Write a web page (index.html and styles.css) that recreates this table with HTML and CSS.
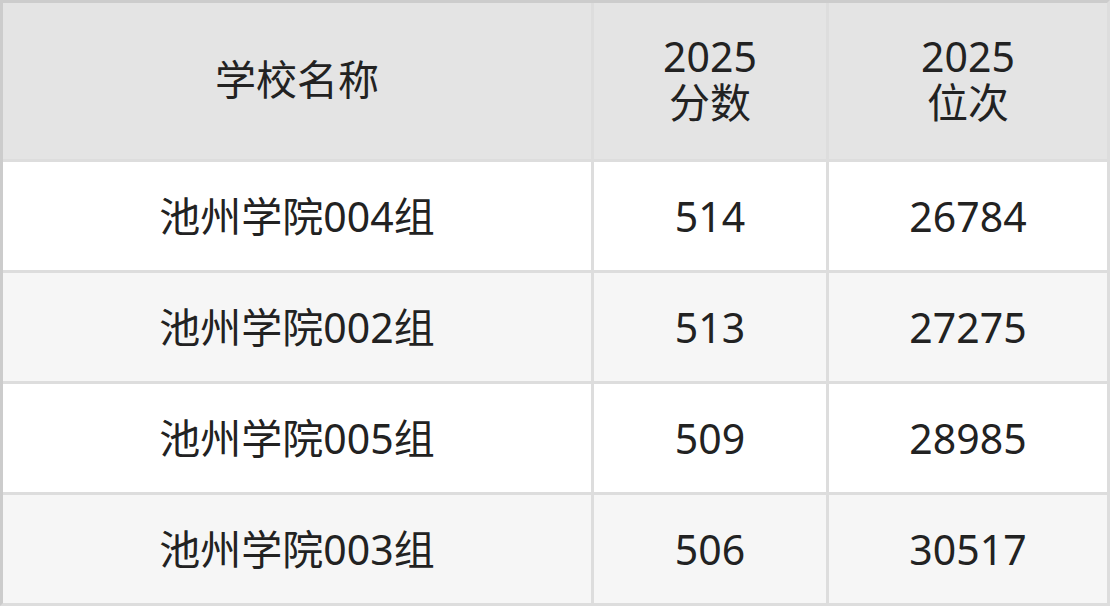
FILE: index.html
```html
<!DOCTYPE html>
<html lang="zh">
<head>
<meta charset="utf-8">
<link rel="stylesheet" href="styles.css">
</head>
<body>
<div class="table">
  <div class="cell head">学校名称</div>
  <div class="cell head">2025<br>分数</div>
  <div class="cell head">2025<br>位次</div>

  <div class="cell">池州学院004组</div>
  <div class="cell">514</div>
  <div class="cell">26784</div>

  <div class="cell alt">池州学院002组</div>
  <div class="cell alt">513</div>
  <div class="cell alt">27275</div>

  <div class="cell">池州学院005组</div>
  <div class="cell">509</div>
  <div class="cell">28985</div>

  <div class="cell alt">池州学院003组</div>
  <div class="cell alt">506</div>
  <div class="cell alt">30517</div>
</div>
</body>
</html>
```
FILE: styles.css
```css
html, body {
  margin: 0;
  padding: 0;
  background: #fff;
}
.table {
  box-sizing: border-box;
  width: 1110px;
  height: 606px;
  display: grid;
  grid-template-columns: 588px 232px 278px;
  grid-template-rows: 156px repeat(4, 108px);
  gap: 3px;
  background: #dddddd;
  border: 3px solid #dddddd;
  border-top-color: #cccccc;
  border-left-color: #cccccc;
  font-family: "Noto Sans", "Noto Sans CJK SC", sans-serif;
  font-size: 41px;
  line-height: 46px;
  color: #222;
}
.cell {
  background: #fff;
  display: flex;
  align-items: center;
  justify-content: center;
  text-align: center;
}
.cell.head {
  background: #e4e4e4;
  padding-bottom: 4px;
}
.cell.alt {
  background: #f6f6f6;
}
```
